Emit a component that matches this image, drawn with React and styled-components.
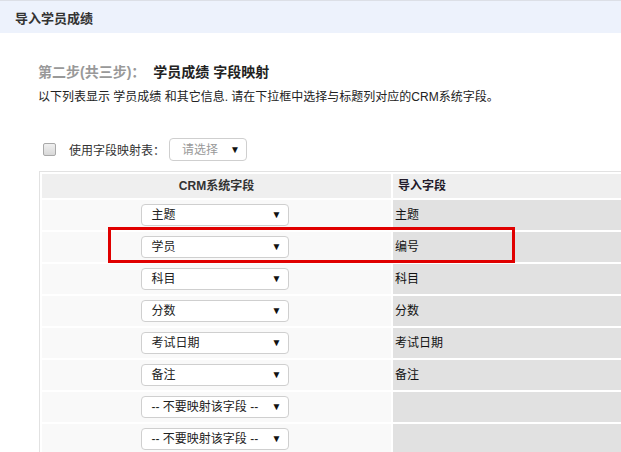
import React from 'react';
import styled, { createGlobalStyle } from 'styled-components';

const GlobalStyle = createGlobalStyle`
  html, body {
    margin: 0;
    padding: 0;
    background: #fff;
    overflow: hidden;
  }
  body {
    font-family: "Liberation Sans", "Noto Sans CJK SC", sans-serif;
    font-size: 12px;
    color: #333;
  }
`;

const Page = styled.div`
  width: 621px;
  height: 452px;
  position: relative;
  overflow: hidden;
`;

const TopBar = styled.div`
  height: 32px;
  border-top: 1px solid #dcdfe6;
  background: #edf2fc;
  display: flex;
  align-items: center;
  padding-left: 15px;
  font-size: 13px;
  font-weight: bold;
  color: #333;
`;

const Content = styled.div`
  padding: 29px 0 0 38px;
`;

const StepTitle = styled.div`
  font-size: 14px;
  line-height: 20px;
  font-weight: bold;
  color: #222;

  .step {
    color: #999;
    margin-right: 8px;
  }
`;

const Desc = styled.div`
  margin-top: 6px;
  line-height: 18px;
  color: #222;
`;

const MapRow = styled.div`
  margin-top: 32px;
  display: flex;
  align-items: center;
  height: 23px;
`;

const CheckBox = styled.span`
  width: 11px;
  height: 11px;
  margin-left: 5px;
  border: 1px solid #a9a9a9;
  border-radius: 2px;
  background: linear-gradient(#f0f0f0, #d8d8d8);
`;

const Label = styled.span`
  margin-left: 13px;
  margin-right: 4px;
  color: #333;
`;

const SelectBox = styled.div`
  box-sizing: border-box;
  width: ${({ $w }) => $w}px;
  height: ${({ $h }) => $h || 22}px;
  border: 1px solid #cfcfcf;
  border-radius: 4px;
  background: #fff;
  display: flex;
  align-items: center;
  justify-content: space-between;
  padding: 0 6px 0 ${({ $pl }) => $pl || 10}px;
  color: ${({ $muted }) => ($muted ? '#999' : '#222')};
  font-size: 12px;
  line-height: 16px;
  margin: ${({ $center }) => ($center ? '0 auto' : '0')};
  white-space: nowrap;
`;

const Arrow = styled.span`
  font-size: 10px;
  color: #111;
`;

const Table = styled.table`
  margin-top: 10px;
  margin-left: 1px;
  border: 1px solid #e2e2e2;
  border-right: none;
  border-collapse: separate;
  border-spacing: 2px;
  width: 640px;
  table-layout: fixed;
`;

const HeadCell = styled.th`
  height: 24px;
  padding: 0;
  background: #efefef;
  font-size: 12px;
  line-height: 16px;
  font-weight: bold;
  color: ${({ $left }) => ($left ? '#333' : '#221a2a')};
  text-align: ${({ $left }) => ($left ? 'center' : 'left')};
  padding-left: ${({ $left }) => ($left ? 0 : 5)}px;
  width: ${({ $w }) => $w}px;
`;

const SelCell = styled.td`
  height: 30px;
  padding: 0 4px 0 0;
  background: #f9f9f9;
  line-height: 16px;
`;

const FieldCell = styled.td`
  height: 30px;
  padding: 0 0 0 2px;
  background: #e1e1e1;
  color: #111;
  font-size: 12px;
  line-height: 16px;
`;

const Marker = styled.div`
  position: absolute;
  left: 108px;
  top: 227px;
  width: 407px;
  height: 36px;
  box-sizing: border-box;
  border: 3px solid #e00000;
  pointer-events: none;
`;

const rows = [
  ['主题', '主题'],
  ['学员', '编号'],
  ['科目', '科目'],
  ['分数', '分数'],
  ['考试日期', '考试日期'],
  ['备注', '备注'],
  ['-- 不要映射该字段 --', ''],
  ['-- 不要映射该字段 --', ''],
];

export default function App() {
  return (
    <Page>
      <GlobalStyle />
      <TopBar>导入学员成绩</TopBar>
      <Content>
        <StepTitle>
          <span className="step">第二步(共三步)：</span>学员成绩 字段映射
        </StepTitle>
        <Desc>以下列表显示 学员成绩 和其它信息. 请在下拉框中选择与标题列对应的CRM系统字段。</Desc>
        <MapRow>
          <CheckBox />
          <Label>使用字段映射表：</Label>
          <SelectBox $w={78} $h={23} $pl={12} $muted>
            请选择 <Arrow>▼</Arrow>
          </SelectBox>
        </MapRow>
        <Table>
          <thead>
            <tr>
              <HeadCell $left $w={349}>CRM系统字段</HeadCell>
              <HeadCell $w={280}>导入字段</HeadCell>
            </tr>
          </thead>
          <tbody>
            {rows.map(([crm, field], i) => (
              <tr key={i}>
                <SelCell>
                  <SelectBox $w={148} $center>
                    {crm} <Arrow>▼</Arrow>
                  </SelectBox>
                </SelCell>
                <FieldCell>{field}</FieldCell>
              </tr>
            ))}
          </tbody>
        </Table>
      </Content>
      <Marker />
    </Page>
  );
}
